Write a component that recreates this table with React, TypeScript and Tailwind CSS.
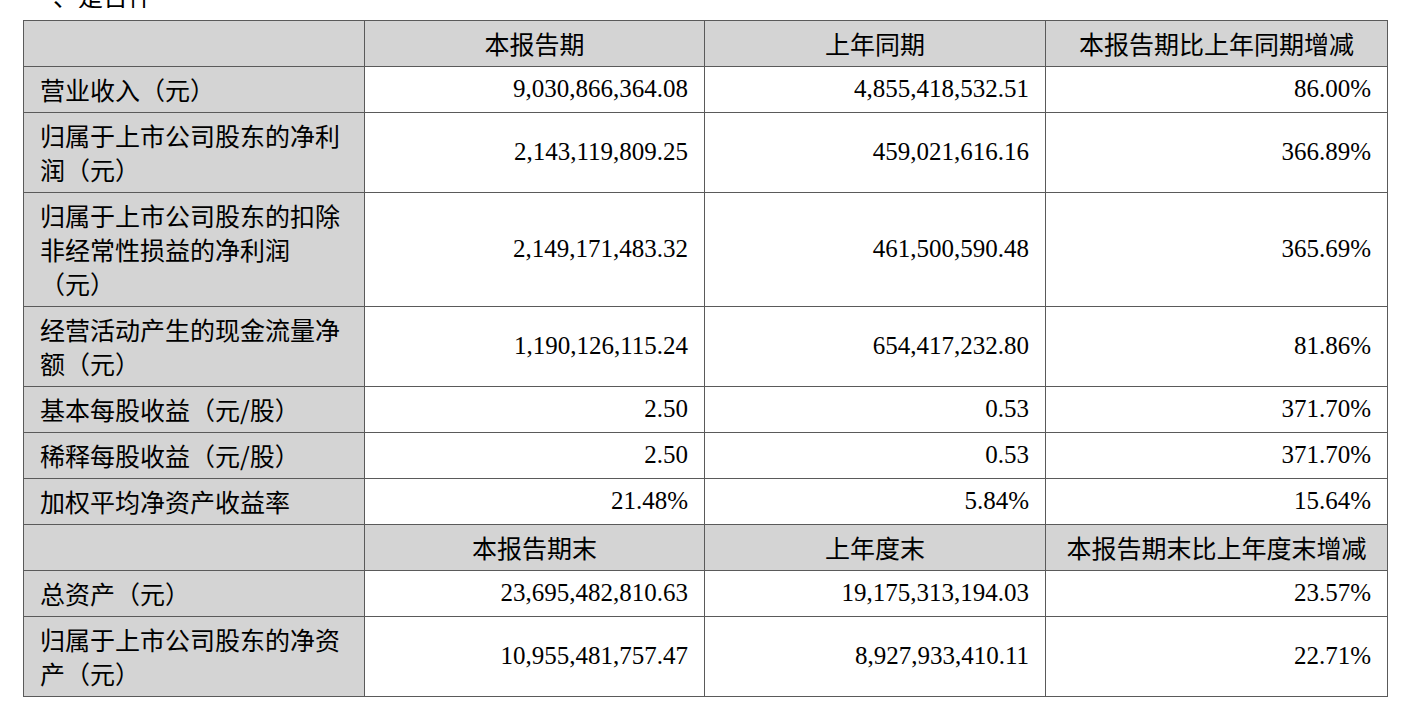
const rows1 = [
  ['营业收入（元）', '9,030,866,364.08', '4,855,418,532.51', '86.00%'],
  ['归属于上市公司股东的净利润（元）', '2,143,119,809.25', '459,021,616.16', '366.89%'],
  ['归属于上市公司股东的扣除非经常性损益的净利润（元）', '2,149,171,483.32', '461,500,590.48', '365.69%'],
  ['经营活动产生的现金流量净额（元）', '1,190,126,115.24', '654,417,232.80', '81.86%'],
  ['基本每股收益（元/股）', '2.50', '0.53', '371.70%'],
  ['稀释每股收益（元/股）', '2.50', '0.53', '371.70%'],
  ['加权平均净资产收益率', '21.48%', '5.84%', '15.64%'],
];

const rows2 = [
  ['总资产（元）', '23,695,482,810.63', '19,175,313,194.03', '23.57%'],
  ['归属于上市公司股东的净资产（元）', '10,955,481,757.47', '8,927,933,410.11', '22.71%'],
];

const cjk = { fontFamily: '"Noto Sans CJK SC", sans-serif' };

function HeaderRow({ cols }: { cols: string[] }) {
  return (
    <tr className="bg-[#d4d4d4]">
      <td className="border border-[#5a5a5a] px-4 pt-[5px] pb-[6px]"></td>
      {cols.map((c) => (
        <td key={c} style={cjk} className="border border-[#5a5a5a] px-4 pt-[5px] pb-[6px] text-center">
          {c}
        </td>
      ))}
    </tr>
  );
}

function DataRow({ row }: { row: string[] }) {
  return (
    <tr>
      <td style={cjk} className="border border-[#5a5a5a] bg-[#d4d4d4] px-4 pt-[5px] pb-[6px] text-left align-middle">
        {row[0]}
      </td>
      {row.slice(1).map((v, i) => (
        <td key={i} className="border border-[#5a5a5a] bg-white px-4 pt-[5px] pb-[6px] text-right align-middle">
          {v}
        </td>
      ))}
    </tr>
  );
}

export default function App() {
  return (
    <div
      className="min-h-[710px] bg-white text-black"
      style={{ fontFamily: '"Liberation Serif", "Noto Sans CJK SC", serif' }}
    >
      <div className="h-[8px] overflow-hidden pl-[28px] flex items-end">
        <div style={cjk} className="text-[25px] leading-[25px] whitespace-nowrap">一、是否件</div>
      </div>
      <div className="pl-[23px] pt-[12px]">
        <table className="table-fixed border-collapse w-[1364px] text-[25px] leading-[34px]">
          <colgroup>
            <col className="w-[341px]" />
            <col className="w-[340px]" />
            <col className="w-[341px]" />
            <col className="w-[342px]" />
          </colgroup>
          <tbody>
            <HeaderRow cols={['本报告期', '上年同期', '本报告期比上年同期增减']} />
            {rows1.map((r) => (
              <DataRow key={r[0]} row={r} />
            ))}
            <HeaderRow cols={['本报告期末', '上年度末', '本报告期末比上年度末增减']} />
            {rows2.map((r) => (
              <DataRow key={r[0]} row={r} />
            ))}
          </tbody>
        </table>
      </div>
    </div>
  );
}
